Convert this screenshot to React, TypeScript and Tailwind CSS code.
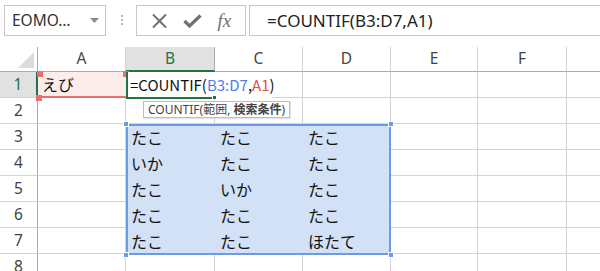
import React from "react";

const cols = ["A", "B", "C", "D", "E", "F", ""];

const data: Record<number, string[]> = {
  3: ["たこ", "たこ", "たこ"],
  4: ["いか", "たこ", "たこ"],
  5: ["たこ", "いか", "たこ"],
  6: ["たこ", "たこ", "たこ"],
  7: ["たこ", "たこ", "ほたて"],
};

const uiFont = { fontFamily: '"Noto Sans", "Noto Sans CJK JP", sans-serif' };
const cellFont = { fontFamily: '"Noto Sans CJK JP", "Noto Sans", sans-serif' };

const Handle: React.FC<{ className: string }> = ({ className }) => (
  <div className={`absolute w-[6px] h-[6px] ${className}`} />
);

const Toolbar: React.FC = () => (
  <div className="h-[47px] flex items-start pt-[5px] pl-[4px]">
    <div className="w-[102px] h-[31px] border border-[#c6c6c6] flex items-center pl-[7px] pr-[6px] text-[15.5px] text-[#333]">
      <span className="flex-1">EOMO…</span>
      <svg width="9" height="5" viewBox="0 0 9 5">
        <path d="M0 0h9L4.5 5z" fill="#8a8a8a" />
      </svg>
    </div>
    <div className="ml-[15px] mt-[10px] flex flex-col gap-[2px]">
      <div className="w-[2px] h-[2px] bg-[#b5b5b5]" />
      <div className="w-[2px] h-[2px] bg-[#b5b5b5]" />
      <div className="w-[2px] h-[2px] bg-[#b5b5b5]" />
    </div>
    <div className="ml-[13px] w-[110px] h-[31px] border border-[#c6c6c6] flex items-center justify-around px-[6px]">
      <svg width="17" height="16" viewBox="0 0 17 16">
        <path d="M2 1.5l13 13M15 1.5L2 14.5" stroke="#707070" strokeWidth="2" />
      </svg>
      <svg width="19" height="14" viewBox="0 0 19 14">
        <path d="M1.5 7l5 5L17.5 1.5" stroke="#707070" strokeWidth="3.2" fill="none" />
      </svg>
      <span
        className="text-[19px] italic text-[#707070] leading-none"
        style={{ fontFamily: '"Liberation Serif", serif' }}
      >
        fx
      </span>
    </div>
    <div className="ml-[3px] flex-1 h-[31px] border-y border-l border-[#c6c6c6] flex items-center pl-[17px] text-[17px] text-[#222]">
      =COUNTIF(B3:D7,A1)
    </div>
  </div>
);

export default function App() {
  return (
    <div className="w-[600px] h-[271px] overflow-hidden bg-white relative" style={uiFont}>
      <Toolbar />

      <div className="grid grid-cols-[38px_88px_89px_88px_88px_87px_89px_40px]">
        {/* header row */}
        <div className="h-[25px] border-r border-b border-[#ababab] relative">
          <svg className="absolute right-[3px] bottom-[3px]" width="16" height="16" viewBox="0 0 16 16">
            <path d="M16 0V16H0z" fill="#dcdcdc" />
          </svg>
        </div>
        {cols.map((c, i) =>
          c === "B" ? (
            <div
              key={i}
              className="h-[25px] flex items-center justify-center bg-[#e1e1e1] border-r border-[#ababab] border-b-2 border-b-[#217346] text-[15.5px] text-[#217346]"
            >
              {c}
            </div>
          ) : (
            <div
              key={i}
              className="h-[25px] flex items-center justify-center border-r border-r-[#d4d4d4] border-b border-b-[#ababab] text-[15.5px] text-[#444]"
            >
              {c}
            </div>
          )
        )}

        {[1, 2, 3, 4, 5, 6, 7, 8].map((r) => (
          <React.Fragment key={r}>
            <div
              className={`h-[26px] flex items-center justify-center text-[15.5px] border-b border-[#d4d4d4] ${
                r === 1
                  ? "bg-[#e1e1e1] text-[#217346] border-r-2 border-r-[#217346]"
                  : "text-[#444] border-r border-r-[#ababab]"
              }`}
            >
              {r}
            </div>
            {cols.map((_, ci) => {
              const sel = r >= 3 && r <= 7 && ci >= 1 && ci <= 3;
              if (r === 1 && ci === 0) {
                return (
                  <div
                    key={ci}
                    className="h-[26px] bg-[#fdecec] border-b-2 border-[#e8706e] flex items-center pl-[4px] text-[16px] text-[#111]"
                    style={cellFont}
                  >
                    えび
                  </div>
                );
              }
              if (r === 1 && ci === 1) {
                return <div key={ci} className="h-[26px] border-b border-[#d4d4d4]" />;
              }
              if (sel) {
                return (
                  <div
                    key={ci}
                    className="h-[26px] bg-[#d2e1f5] flex items-center pl-[5px] text-[16px] text-[#111]"
                    style={cellFont}
                  >
                    {data[r][ci - 1]}
                  </div>
                );
              }
              return <div key={ci} className="h-[26px] border-r border-b border-[#d4d4d4]" />;
            })}
          </React.Fragment>
        ))}
      </div>

      {/* A1 reference corners */}
      <Handle className="left-[37px] top-[71px] w-[4px] h-[4px] bg-[#e8706e]" />
      <Handle className="left-[123px] top-[71px] w-[4px] h-[4px] bg-[#e8706e]" />
      <Handle className="left-[36px] top-[95px] w-[5px] h-[5px] bg-[#e8706e]" />

      {/* in-cell editor on B1 */}
      <div
        className="absolute left-[126px] top-[72px] w-[146px] h-[26px] bg-white flex items-center pl-[4px] text-[15px] text-[#111] whitespace-nowrap"
        style={cellFont}
      >
        <span>=COUNTIF(</span>
        <span className="text-[#4f81e4]">B3:D7</span>
        <span>,</span>
        <span className="text-[#e0504e]">A1</span>
        <span className="inline-block w-[1px] h-[19px] bg-[#222]" />
        <span>)</span>
      </div>
      <div className="absolute left-[126px] top-[72px] w-[2px] h-[27px] bg-[#217346]" />
      <div className="absolute left-[126px] top-[97px] w-[89px] h-[2px] bg-[#217346]" />
      <div className="absolute left-[212px] top-[95px] w-[5px] h-[5px] bg-[#217346] border border-white" />

      {/* tooltip */}
      <div
        className="absolute left-[143px] top-[101px] h-[17px] px-[4px] bg-white border border-[#bdbdbd] flex items-center text-[12px] text-[#444] whitespace-nowrap shadow-[1px_1px_1px_rgba(0,0,0,0.1)]"
        style={uiFont}
      >
        COUNTIF(範囲, <span className="font-bold ml-[3px]">検索条件</span>)
      </div>

      {/* selection B3:D7 */}
      <div className="absolute left-[126px] top-[124px] w-[265px] h-[131px] border-2 border-[#6a9be9]" />
      <Handle className="left-[123px] top-[121px] bg-[#6a9be9] border border-white" />
      <Handle className="left-[388px] top-[121px] bg-[#6a9be9] border border-white" />
      <Handle className="left-[123px] top-[252px] bg-[#6a9be9] border border-white" />
      <Handle className="left-[388px] top-[252px] bg-[#6a9be9] border border-white" />
    </div>
  );
}
